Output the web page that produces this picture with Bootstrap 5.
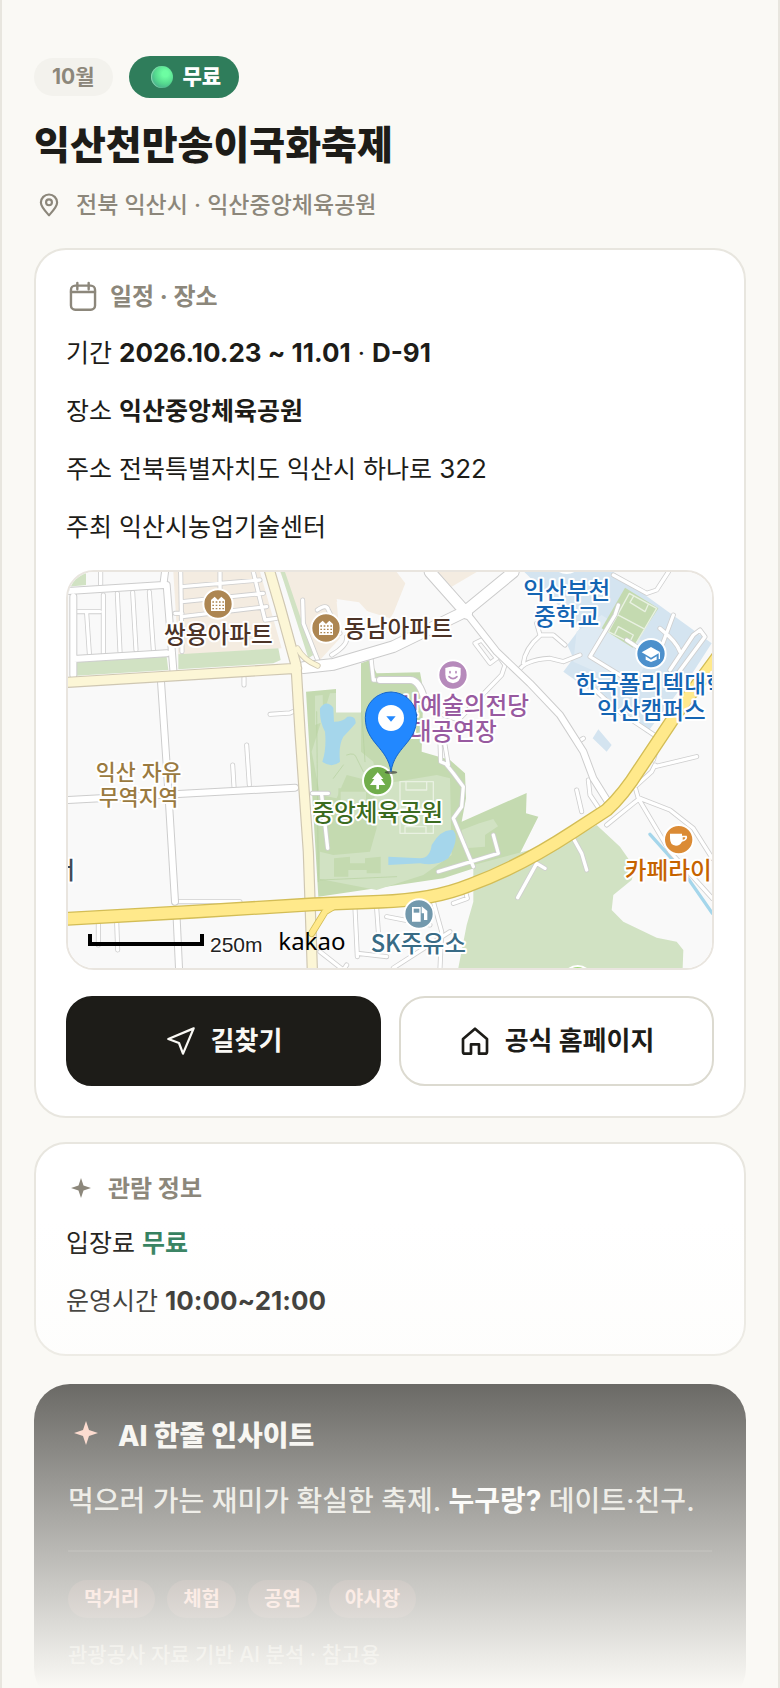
<!DOCTYPE html>
<html lang="ko">
<head>
<meta charset="utf-8">
<meta name="viewport" content="width=device-width, initial-scale=1">
<title>익산천만송이국화축제</title>
<link href="https://cdn.jsdelivr.net/npm/bootstrap@5.3.0/dist/css/bootstrap.min.css" rel="stylesheet">
<style>
:root{--ink:#1d1c18;--muted:#8c877b;--line:#e8e6df;--paper:#faf9f5;--green:#2f7d5b}
body{background:var(--paper);color:var(--ink);font-family:Inter,"Noto Sans CJK KR",sans-serif;font-size:25px;line-height:46px}
.preview{height:100vh;overflow:hidden;border-left:2px solid var(--line);border-right:2px solid var(--line);padding:56px 32px 0}
.preview-fade{position:absolute;left:0;right:0;bottom:0;height:468px;background:linear-gradient(rgba(250,249,245,0),#faf9f5);pointer-events:none}
.pill{border-radius:50px;font-weight:700;font-size:21px;line-height:30px}
.pill-month{background:#f3f2ed;color:var(--muted);padding:4px 18px}
.pill-free{background:var(--green);color:#fff;padding:6px 18px 6px 22px;font-weight:900;gap:10px}
.dot{width:22px;height:22px;border-radius:50%;background:radial-gradient(circle at 65% 35%,#6dfda2 15%,#55d98f 50%,#43a08a 85%);box-shadow:inset 1px 0 1px #8fd9b4}
.fest-name{font-size:39px;line-height:54px;font-weight:800;margin:20px 0 0}
.place{color:var(--muted);font-size:23px;font-weight:500;line-height:34px;margin:16px 0 26px;padding-left:2px;gap:14px}
.panel{background:#fff;border:2px solid var(--line);border-radius:32px;padding:30px}
.panel-head{color:var(--muted);font-size:24px;line-height:30px;font-weight:700;margin:0 0 16px;gap:10px}
.panel p{margin:0 0 12px}
.panel p:last-child{margin:0}
.panel strong{font-weight:700}
.num{font-size:26px}
.map-box{border:2px solid #e9e5df;border-radius:28px;overflow:hidden;margin:20px 0 26px}
.map-box svg{display:block;width:100%;height:auto}
.act-row{gap:18px}
.act{--bs-btn-font-size:26px;--bs-btn-font-weight:700;--bs-btn-border-width:2px;--bs-btn-border-radius:26px;line-height:42px;padding:22px 12px;gap:14px;flex:1 1 0}
.act-dark{background:var(--ink);color:#faf9f5;border-color:var(--ink)}
.act-light{background:#fff;color:var(--ink);border-color:#dcdad0}
.insight{background:var(--ink);color:#dddcd5;border-radius:36px;padding:34px;font-size:28px;font-weight:500;margin-top:28px}
.insight h2{font-size:28px;line-height:36px;font-weight:800;color:#f5f4f0;margin:0;gap:14px}
.insight hr{border-top:2px solid #33322e;opacity:1;margin:26px 0 28px}
.tag-row{gap:12px}
.insight .pill{background:#43302b;color:#ffb8a8;padding:4px 16px;font-size:20px}
.insight small{display:block;font-size:21px;line-height:30px;color:#a8a59b;margin:22px 0 0}
.st{fill:none;stroke:currentColor;stroke-width:2;stroke-linecap:round;stroke-linejoin:round}
.st-thin{stroke-width:1.700}
/* map layers */
.map-box g{fill:none;stroke-linecap:round;stroke-linejoin:round}
.lbl{font-family:"Noto Sans CJK KR",sans-serif;font-size:71px;font-weight:500;stroke:#fff;stroke-width:12px;paint-order:stroke;stroke-linejoin:round}
.lbl-area{font-size:65px}
.mid{text-anchor:middle}
</style>
</head>
<body>
<div class="preview position-relative">
  <header>
    <div class="d-flex align-items-center gap-3">
      <span class="pill pill-month">10월</span>
      <span class="pill pill-free d-inline-flex align-items-center"><i class="dot"></i>무료</span>
    </div>
    <h1 class="fest-name">익산천만송이국화축제</h1>
    <div class="place d-flex align-items-center">
      <svg width="26" height="26" viewBox="0 0 24 24" class="st"><path d="M12 21.500C9 18.200 4.500 13.800 4.500 9.800a7.500 7.500 0 0 1 15 0c0 4-4.500 8.400-7.500 11.700z"/><circle cx="12" cy="9.500" r="2.700"/></svg>
      <span>전북 익산시 · 익산중앙체육공원</span>
    </div>
  </header>

  <section class="panel mb-4">
    <h2 class="panel-head d-flex align-items-center"><svg width="34" height="34" viewBox="0 0 24 24" class="st st-thin"><rect x="3.500" y="4" width="17" height="17" rx="3"/><path d="M3.500 8.500h17M8 2v4.500M16 2v4.500"/></svg>일정 · 장소</h2>
    <p>기간 <strong class="num">2026.10.23 ~ 11.01</strong> · <strong class="num">D-91</strong></p>
    <p>장소 <strong>익산중앙체육공원</strong></p>
    <p>주소 전북특별자치도 익산시 하나로 <span class="num">322</span></p>
    <p>주최 익산시농업기술센터</p>

    <div class="map-box">
    <svg viewBox="24 21 1932 1188" role="img" aria-label="익산중앙체육공원 지도">
      <defs>
        <path id="lanes" d="M362 21L366 260M366 65L600 45M366 110L610 85M366 155L620 125M480 21V75M580 21L615 165 650 160M345 145H366M122 21V60M130 90V265M38 140H120M80 145L88 265M172 85L180 260M218 82L228 255M268 80L280 255M552 338V360M630 448L690 444 703 438M560 540L568 660M518 600L522 665M348 1010H540M115 1075V1140M170 1070L173 1155M728 105L730 175 775 290M772 135Q800 115 805 135L840 205M860 215Q865 240 815 270M933 280L940 345H990M757 685H805M785 690L803 850M1245 235L1290 295 1310 280 1265 225zM1310 265L1335 300 1325 330 1195 465 1150 450M1430 175L1440 210 1480 210 1515 240M1440 212Q1395 250 1390 295M1375 320Q1390 285 1470 280L1510 290 1560 270M1140 530L1142 590 1165 600 1155 540M1555 530L1570 520M1675 120L1665 150 1590 275 1745 370M1700 225L1790 285 1840 150M1800 190Q1850 230 1860 260M1830 315L1900 210 1920 195 1935 215 1850 330M1660 30L1760 85 1790 75 1825 21M1785 605L1910 575M1800 520L1780 585M1600 370L1670 435 1790 515M1180 1015L1222 1000 1215 975M885 1030L892 1175M950 1030L955 1100M892 1165L980 1175M780 1160L850 1215 860 1200M980 1055L1110 1080M1120 1010L1145 1100 1140 1209M1170 1100L1000 1209M1160 600L1180 625 1210 665 1205 725 1180 760 1240 905M1135 920L1315 865 1300 810M1373 998L1430 895 1455 910M1540 820L1565 865 1580 915M1550 675L1565 740M1640 780L1720 715 1740 700M1735 700L1725 665 1775 620 1785 600M1735 700L1830 860 1957 1000M1740 700L1830 735 1900 790 1957 880M1585 645L1590 690 1620 735"/>
        <path id="streets" d="M24 78L310 60 315 21M320 60L340 315M40 95V330M40 282L320 265M303 350L320 600 345 1010M24 705L300 690 705 668M350 1060L357 1209M960 345H1050Q1080 345 1095 410"/>
        <path id="avenue" d="M730 308L820 298 1000 245 1215 140 1360 21M1110 21L1220 145"/>
        <path id="diagonal" d="M1220 145L1310 260 1410 355 1500 450 1570 560 1600 640 1650 720"/>
        <path id="local" d="M24 352L710 310M628 15L660 125 708 300 720 500 745 860 757 1215"/>
        <path id="slip" d="M712 250Q730 285 773 302"/>
        <path id="ramp" d="M755 1105L795 1040 820 1025"/>
        <path id="trunk" d="M10 1062L400 1040 760 1018 960 1010Q1120 1005 1230 960 1380 905 1540 800L1640 735Q1690 690 1740 610L1860 430 1970 280"/>
      </defs>
      <rect x="24" y="21" width="1932" height="1188" fill="#f9f9f9"/>
      <!-- land use -->
      <path fill="#f4ece1" d="M340 21H600L665 250 355 270zM660 21H1010L1036 55 1000 145 990 160 830 110 840 220 780 285 740 200zM1130 21H1250L1175 65z"/>
      <path fill="#f9f9f9" d="M830 102L897 112 960 180 900 240 850 200z"/>
      <path fill="#d1e2c3" d="M24 21H78V60L24 65zM48 292L320 275 325 315 48 332zM355 268L655 250 662 285 640 295 355 313zM662 21H675L760 270 745 280z"/>
      <path fill="#c4dab0" d="M738 380L828 372V443H903V295L930 285 950 325 1080 322 1090 375 1085 560 1170 585 1215 625 1218 700 1205 770 1400 684 1398 745 1435 755 1380 865 1150 940 775 995z"/>
      <path fill="#d1e2c3" d="M765 392L788 390 790 470 765 480zM810 385L828 384V443H903V560L940 590 950 660 1130 630 1170 640 1175 870 1090 930 950 975 780 942V860L820 870 930 860 950 790 940 650 860 630 830 700 780 690 755 560z"/>
      <path fill="#c4dab0" d="M822 880L870 875V895H915V880L962 875V925H920V915H865V935H822zM835 670H930V760L835 775z"/>
      <path fill="#d1e2c3" d="M842 680H918V750L842 760zM1205 795L1258 775 1300 762 1314 784 1275 810V845L1215 850z"/>
      <path fill="#d1e2c3" d="M1240 900L1540 820 1610 780 1680 845 1725 910 1715 945 1660 990 1655 1035 1690 1070 1790 1118 1850 1130 1870 1155 1868 1209H1195L1220 1080 1240 1010z"/>
      <path fill="#d4e4f0" d="M1393 21H1660L1955 235 1900 320 1760 505 1735 480 1510 320 1540 280 1522 240 1560 190 1500 125zM1598 520L1615 493 1655 540 1640 560z"/>
      <path fill="#deeaf3" d="M1550 200L1625 150 1780 250 1720 370 1540 290z"/>
      <path fill="#c4dab0" d="M1695 68L1795 130 1718 248 1625 190z"/>
      <path fill="#a5d6eb" d="M780 430Q798 402 820 428L822 470Q850 470 862 455 888 450 887 475 870 495 850 515 835 540 840 590 815 612 787 590 800 550 795 500 778 470 780 430zM985 875L1080 880Q1110 880 1115 840 1145 790 1180 796 1200 820 1165 880 1130 905 1080 895L985 900z"/>
      <g stroke="#a5d6eb" stroke-width="10"><path d="M1770 808L1870 920 1957 1045"/></g>
      <g stroke="#b5d09e" stroke-width="2"><path d="M770 440L775 950M850 600L820 640M905 440L915 590M860 570Q885 560 890 580L910 620M780 945L1010 935"/></g>
      <!-- sports field outlines -->
      <g stroke="#e9f1e2" stroke-width="4"><path d="M1020 650H1120V805H1020zM1038 650V675H1100V650M1035 805V785H1098V805M1020 730H1120M1708 85L1790 130 1725 240 1645 200zM1665 145L1750 190M1720 95L1710 112 1755 140 1765 118M1665 205L1675 185 1720 210 1710 230"/></g>
      <!-- streets: casing first, then surface -->
      <g stroke="#cfcfcf" stroke-width="15"><use href="#lanes"/></g>
      <g stroke="#fff" stroke-width="10"><use href="#lanes"/></g>
      <g stroke="#cdcdcd" stroke-width="24"><use href="#streets"/><use href="#diagonal"/></g>
      <g stroke="#cbcbcb" stroke-width="38"><use href="#avenue"/></g>
      <g stroke="#fff" stroke-width="18"><use href="#streets"/><use href="#diagonal"/></g>
      <g stroke="#fff" stroke-width="32"><use href="#avenue"/></g>
      <!-- main roads -->
      <g stroke="#cfc7b2"><use href="#local" stroke-width="34"/><use href="#slip" stroke-width="18"/></g>
      <g stroke="#fcf6d6"><use href="#local" stroke-width="27"/><use href="#slip" stroke-width="13"/></g>
      <g stroke="#d3bd56"><use href="#trunk" stroke-width="42"/><use href="#ramp" stroke-width="22"/></g>
      <g stroke="#ffe98b"><use href="#ramp" stroke-width="17"/><use href="#trunk" stroke-width="34"/></g>
      <!-- place labels -->
      <text class="lbl" x="312" y="235" fill="#4c3327">쌍용아파트</text>
      <text class="lbl" x="852" y="215" fill="#4c3327">동남아파트</text>
      <text class="lbl mid" x="1520" y="101" fill="#1565b3">익산부천</text>
      <text class="lbl mid" x="1520" y="180" fill="#1565b3">중학교</text>
      <text class="lbl" x="1546" y="384" fill="#1565b3">한국폴리텍대학</text>
      <text class="lbl" x="1611" y="463" fill="#1565b3">익산캠퍼스</text>
      <text class="lbl" x="950" y="447" fill="#985aa0">익산예술의전당</text>
      <text class="lbl mid" x="1180" y="526" fill="#985aa0">대공연장</text>
      <text class="lbl lbl-area mid" x="236" y="644" fill="#9a7a40">익산 자유</text>
      <text class="lbl lbl-area mid" x="236" y="719" fill="#9a7a40">무역지역</text>
      <text class="lbl" x="757" y="767" fill="#3b6b20">중앙체육공원</text>
      <text class="lbl" x="1694" y="943" fill="#c66300">카페라이</text>
      <text class="lbl" x="932" y="1162" fill="#386b85">SK주유소</text>
      <text class="lbl" x="-20" y="943" fill="#404a58">서</text>
      <!-- place markers -->
      <g stroke="#fff" stroke-width="6"><circle cx="1520" cy="-20" r="44" fill="#4d6575"/><circle cx="474" cy="117" r="44" fill="#ad8652"/><circle cx="798" cy="189" r="44" fill="#ad8652"/><circle cx="1179" cy="330" r="44" fill="#b68abb"/><circle cx="1773" cy="266" r="44" fill="#4c90cc"/><circle cx="953" cy="647" r="44" fill="#71ad4b"/><circle cx="1856" cy="824" r="44" fill="#db8b35"/><circle cx="1077" cy="1047" r="44" fill="#7399ad"/><circle cx="1553" cy="1247" r="44" fill="#a5d97c"/></g>
      <path fill="#fff" d="M453 138V105L464 95 474 105 484 95 495 105V138zM777 210V177L788 167 798 177 808 167 819 177V210z"/>
      <g stroke="#ad8652" stroke-width="4"><path stroke-linecap="butt" stroke-dasharray="5 5" d="M457 111H492M457 121H492M457 131H492M781 183H816M781 193H816M781 203H816"/></g>
      <path fill="#fff" d="M1156 309Q1179 300 1202 309V328Q1202 352 1179 355 1156 352 1156 328z"/>
      <g stroke="#b68abb" stroke-width="5"><path d="M1170 320V323M1188 320V323M1167 335Q1179 347 1191 335"/></g>
      <path fill="#fff" d="M1745 262L1773 246 1801 262 1773 278zM1757 274L1773 284 1790 274V284L1773 291 1757 284zM1796 264H1800V282H1796zM953 622L970 642H963L976 660H957V673H949V660H930L943 642H936zM1830 806H1866V812H1880Q1886 825 1866 830 1860 842 1848 842 1830 842 1830 820zM1056 1026H1082V1070H1056zM1085 1024L1102 1038V1065H1092V1045H1085z"/>
      <path fill="#7399ad" d="M1061 1031H1078V1043H1061z"/>
      <path fill="#db8b35" d="M1868 817H1876Q1876 824 1868 824z"/>
      <!-- selected place -->
      <ellipse cx="993" cy="622" rx="19" ry="5" fill="#333" opacity=".65"/>
      <path fill="#2288ff" stroke="#1565c8" stroke-width="3" d="M993 620C982 545 916 535 916 458a77 77 0 0 1 154 0C1070 535 1004 545 993 620z"/>
      <circle cx="993" cy="459" r="39" fill="#fff"/>
      <path fill="#2288ff" d="M979 454H1007L993 470z"/>
      <!-- scale -->
      <path fill="none" stroke="#000" stroke-width="12" d="M90 1107V1137H426V1107"/>
      <text x="450" y="1161" font-family="Liberation Sans, sans-serif" font-size="63" fill="#222" stroke="#fff" stroke-width="8" paint-order="stroke">250m</text>
      <text x="655" y="1155" font-family="Noto Sans, sans-serif" font-size="72">kakao</text>
    </svg>
    </div>

    <div class="act-row d-flex">
      <button type="button" class="btn act act-dark d-flex align-items-center justify-content-center"><svg width="32" height="32" viewBox="0 0 24 24" class="st st-thin"><path d="M21.500 2.500L2.500 10.500 10.500 13.500 13.500 21.500z"/></svg>길찾기</button>
      <a href="#" class="btn act act-light d-flex align-items-center justify-content-center"><svg width="32" height="32" viewBox="0 0 24 24" class="st"><path d="M3 10.500L12 2.800l9 7.700V20a1.500 1.500 0 0 1-1.500 1.500H15V14.500H9v7H4.500A1.500 1.500 0 0 1 3 20z"/></svg>공식 홈페이지</a>
    </div>
  </section>

  <section class="panel">
    <h2 class="panel-head d-flex align-items-center"><svg width="32" height="30" viewBox="0 0 32 30"><path fill="currentColor" d="M15 4L17.500 11.500 25 14 17.500 16.500 15 24 12.500 16.500 5 14 12.500 11.500z"/></svg>관람 정보</h2>
    <p>입장료 <strong style="color:var(--green)">무료</strong></p>
    <p>운영시간 <strong class="num">10:00~21:00</strong></p>
  </section>

  <section class="insight">
    <h2 class="d-flex align-items-center"><svg width="36" height="36" viewBox="0 0 36 36"><path fill="#ffc4b0" d="M18 3L21 12 30 15 21 18 18 27 15 18 6 15 15 12z"/></svg>AI 한줄 인사이트</h2>
    <p class="mt-4 mb-0">먹으러 가는 재미가 확실한 축제. <strong class="text-white">누구랑?</strong> 데이트·친구.</p>
    <hr>
    <div class="d-flex tag-row"><span class="pill">먹거리</span><span class="pill">체험</span><span class="pill">공연</span><span class="pill">야시장</span></div>
    <small>관광공사 자료 기반 AI 분석 · 참고용</small>
  </section>
  <div class="preview-fade"></div>
</div>
<script src="https://cdn.jsdelivr.net/npm/bootstrap@5.3.0/dist/js/bootstrap.bundle.min.js"></script>
</body>
</html>
